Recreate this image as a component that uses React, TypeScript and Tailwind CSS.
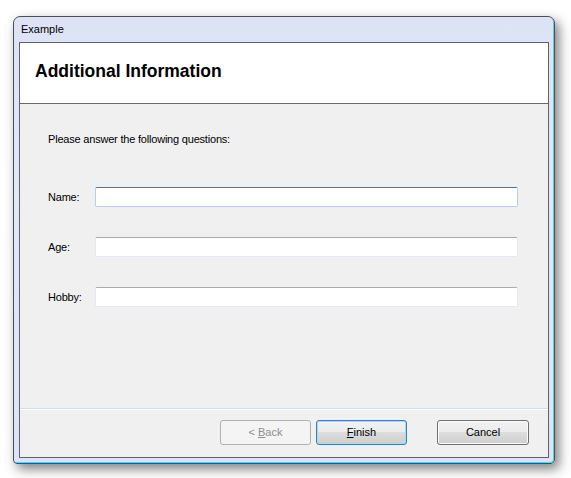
import React from 'react'

const ui = "font-['Liberation_Sans',Arial,sans-serif]"

function Field({ label, focused }: { label: string; focused?: boolean }) {
  return (
    <div className="flex items-center h-[20px]">
      <span className="w-[47px] text-[11px] tracking-[-0.2px] text-black">{label}</span>
      <div
        className={
          focused
            ? 'w-[423px] h-[20px] bg-white border border-[#b5cfe7] border-t-[#3d7bad] rounded-[2px]'
            : 'w-[423px] h-[20px] bg-white border border-[#e3e9ef] border-t-[#ababab] rounded-[2px]'
        }
      />
    </div>
  )
}

export default function App() {
  return (
    <div className={`w-[571px] h-[478px] bg-white pl-[13px] pt-[16px] ${ui}`}>
      {/* window */}
      <div className="w-[542px] h-[448px] flex flex-col px-[5px] pb-[5px] border border-[#4a4f57] rounded-t-[7px] rounded-b-[4px] bg-[linear-gradient(to_bottom,#dce3f5,#e3e8f7_40%,#dde3f6)] shadow-[inset_-1px_-1px_0_#5ccdf2,4px_5px_12px_rgba(0,0,0,0.5)]">
        {/* title bar */}
        <div className="h-[25px] flex items-center pl-[2px] text-[11px] text-black">Example</div>

        {/* client */}
        <div className="flex-1 flex flex-col border border-[#5d636b] bg-[#f0f0f0]">
          <div className="h-[61px] bg-white border-b border-[#696969] flex items-center pl-[15px] pb-[4px]">
            <span className="text-[17.5px] font-bold text-black">Additional Information</span>
          </div>

          <div className="flex-1 flex flex-col pl-[28px] pt-[28px]">
            <p className="text-[11px] tracking-[-0.2px] leading-[14px] text-black">
              Please answer the following questions:
            </p>
            <div className="flex flex-col gap-[30px] mt-[41px]">
              <Field label="Name:" focused />
              <Field label="Age:" />
              <Field label="Hobby:" />
            </div>
          </div>

          {/* footer */}
          <div className="border-t border-[#d5dfe5]">
            <div className="border-t border-white h-[48px] flex pt-[10px] pl-[200px]">
              <button className="w-[91px] h-[25px] rounded-[3px] border border-[#adb2b5] bg-[#f4f4f4] text-[11px] text-[#8d8d8d]">
                &lt; <span className="underline">B</span>ack
              </button>
              <button className="ml-[5px] w-[91px] h-[25px] rounded-[3px] border border-[#3c7fb1] bg-[linear-gradient(to_bottom,#f2f2f2,#ebebeb_50%,#dddddd_50%,#cfcfcf)] shadow-[inset_0_0_0_1px_#9fdcf7] text-[11px] text-black">
                <span className="underline">F</span>inish
              </button>
              <button className="ml-[30px] w-[92px] h-[25px] rounded-[3px] border border-[#707070] bg-[linear-gradient(to_bottom,#f2f2f2,#ebebeb_50%,#dddddd_50%,#cfcfcf)] shadow-[inset_0_0_0_1px_#fbfbfb] text-[11px] text-black">
                Cancel
              </button>
            </div>
          </div>
        </div>
      </div>
    </div>
  )
}
